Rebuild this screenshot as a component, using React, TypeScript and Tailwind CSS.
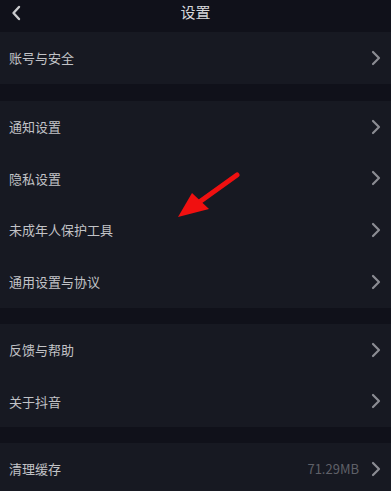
import { ReactNode } from "react";

const FONT = { fontFamily: '"Noto Sans CJK SC", "Noto Sans", sans-serif' };

function Chevron() {
  return (
    <svg width="10" height="16" viewBox="0 0 10 16" className="shrink-0">
      <path d="M2 2 L8 8 L2 14" fill="none" stroke="#8b8c93" strokeWidth="2.2" strokeLinecap="round" strokeLinejoin="round" />
    </svg>
  );
}

function Row({ label, value }: { label: string; value?: string }) {
  return (
    <div className="flex h-[51.75px] items-center justify-between pl-[9px] pr-[10px]">
      <span className="text-[13px] text-[#c2c3c7]">{label}</span>
      <div className="flex items-center gap-[12px]">
        {value && <span className="text-[13px] text-[#5f6068]">{value}</span>}
        <Chevron />
      </div>
    </div>
  );
}

function Section({ children }: { children: ReactNode }) {
  return <div className="bg-[#171922]">{children}</div>;
}

export default function App() {
  return (
    <div className="relative h-[491px] w-[391px] overflow-hidden bg-[#10111a]" style={FONT}>
      {/* header */}
      <div className="relative flex h-[32px] items-center justify-center">
        <svg width="10" height="16" viewBox="0 0 10 16" className="absolute left-[11px] top-[5px]">
          <path d="M8 2 L2.5 8 L8 14" fill="none" stroke="#c9cacd" strokeWidth="2.4" strokeLinecap="round" strokeLinejoin="round" />
        </svg>
        <span className="-mt-[7px] text-[15px] text-[#d6d7da]">设置</span>
      </div>

      <Section>
        <Row label="账号与安全" />
      </Section>
      <div className="h-[17px]" />
      <Section>
        <Row label="通知设置" />
        <Row label="隐私设置" />
        <Row label="未成年人保护工具" />
        <Row label="通用设置与协议" />
      </Section>
      <div className="h-[16px]" />
      <Section>
        <Row label="反馈与帮助" />
        <Row label="关于抖音" />
      </Section>
      <div className="h-[16px]" />
      <Section>
        <Row label="清理缓存" value="71.29MB" />
      </Section>

      {/* red annotation arrow */}
      <svg width="391" height="491" viewBox="0 0 391 491" className="pointer-events-none absolute left-0 top-0">
        <line x1="237" y1="175" x2="198" y2="203" stroke="#f01010" strokeWidth="5" strokeLinecap="round" />
        <polygon points="178,217 192,193 209,209" fill="#f01010" />
      </svg>
    </div>
  );
}
